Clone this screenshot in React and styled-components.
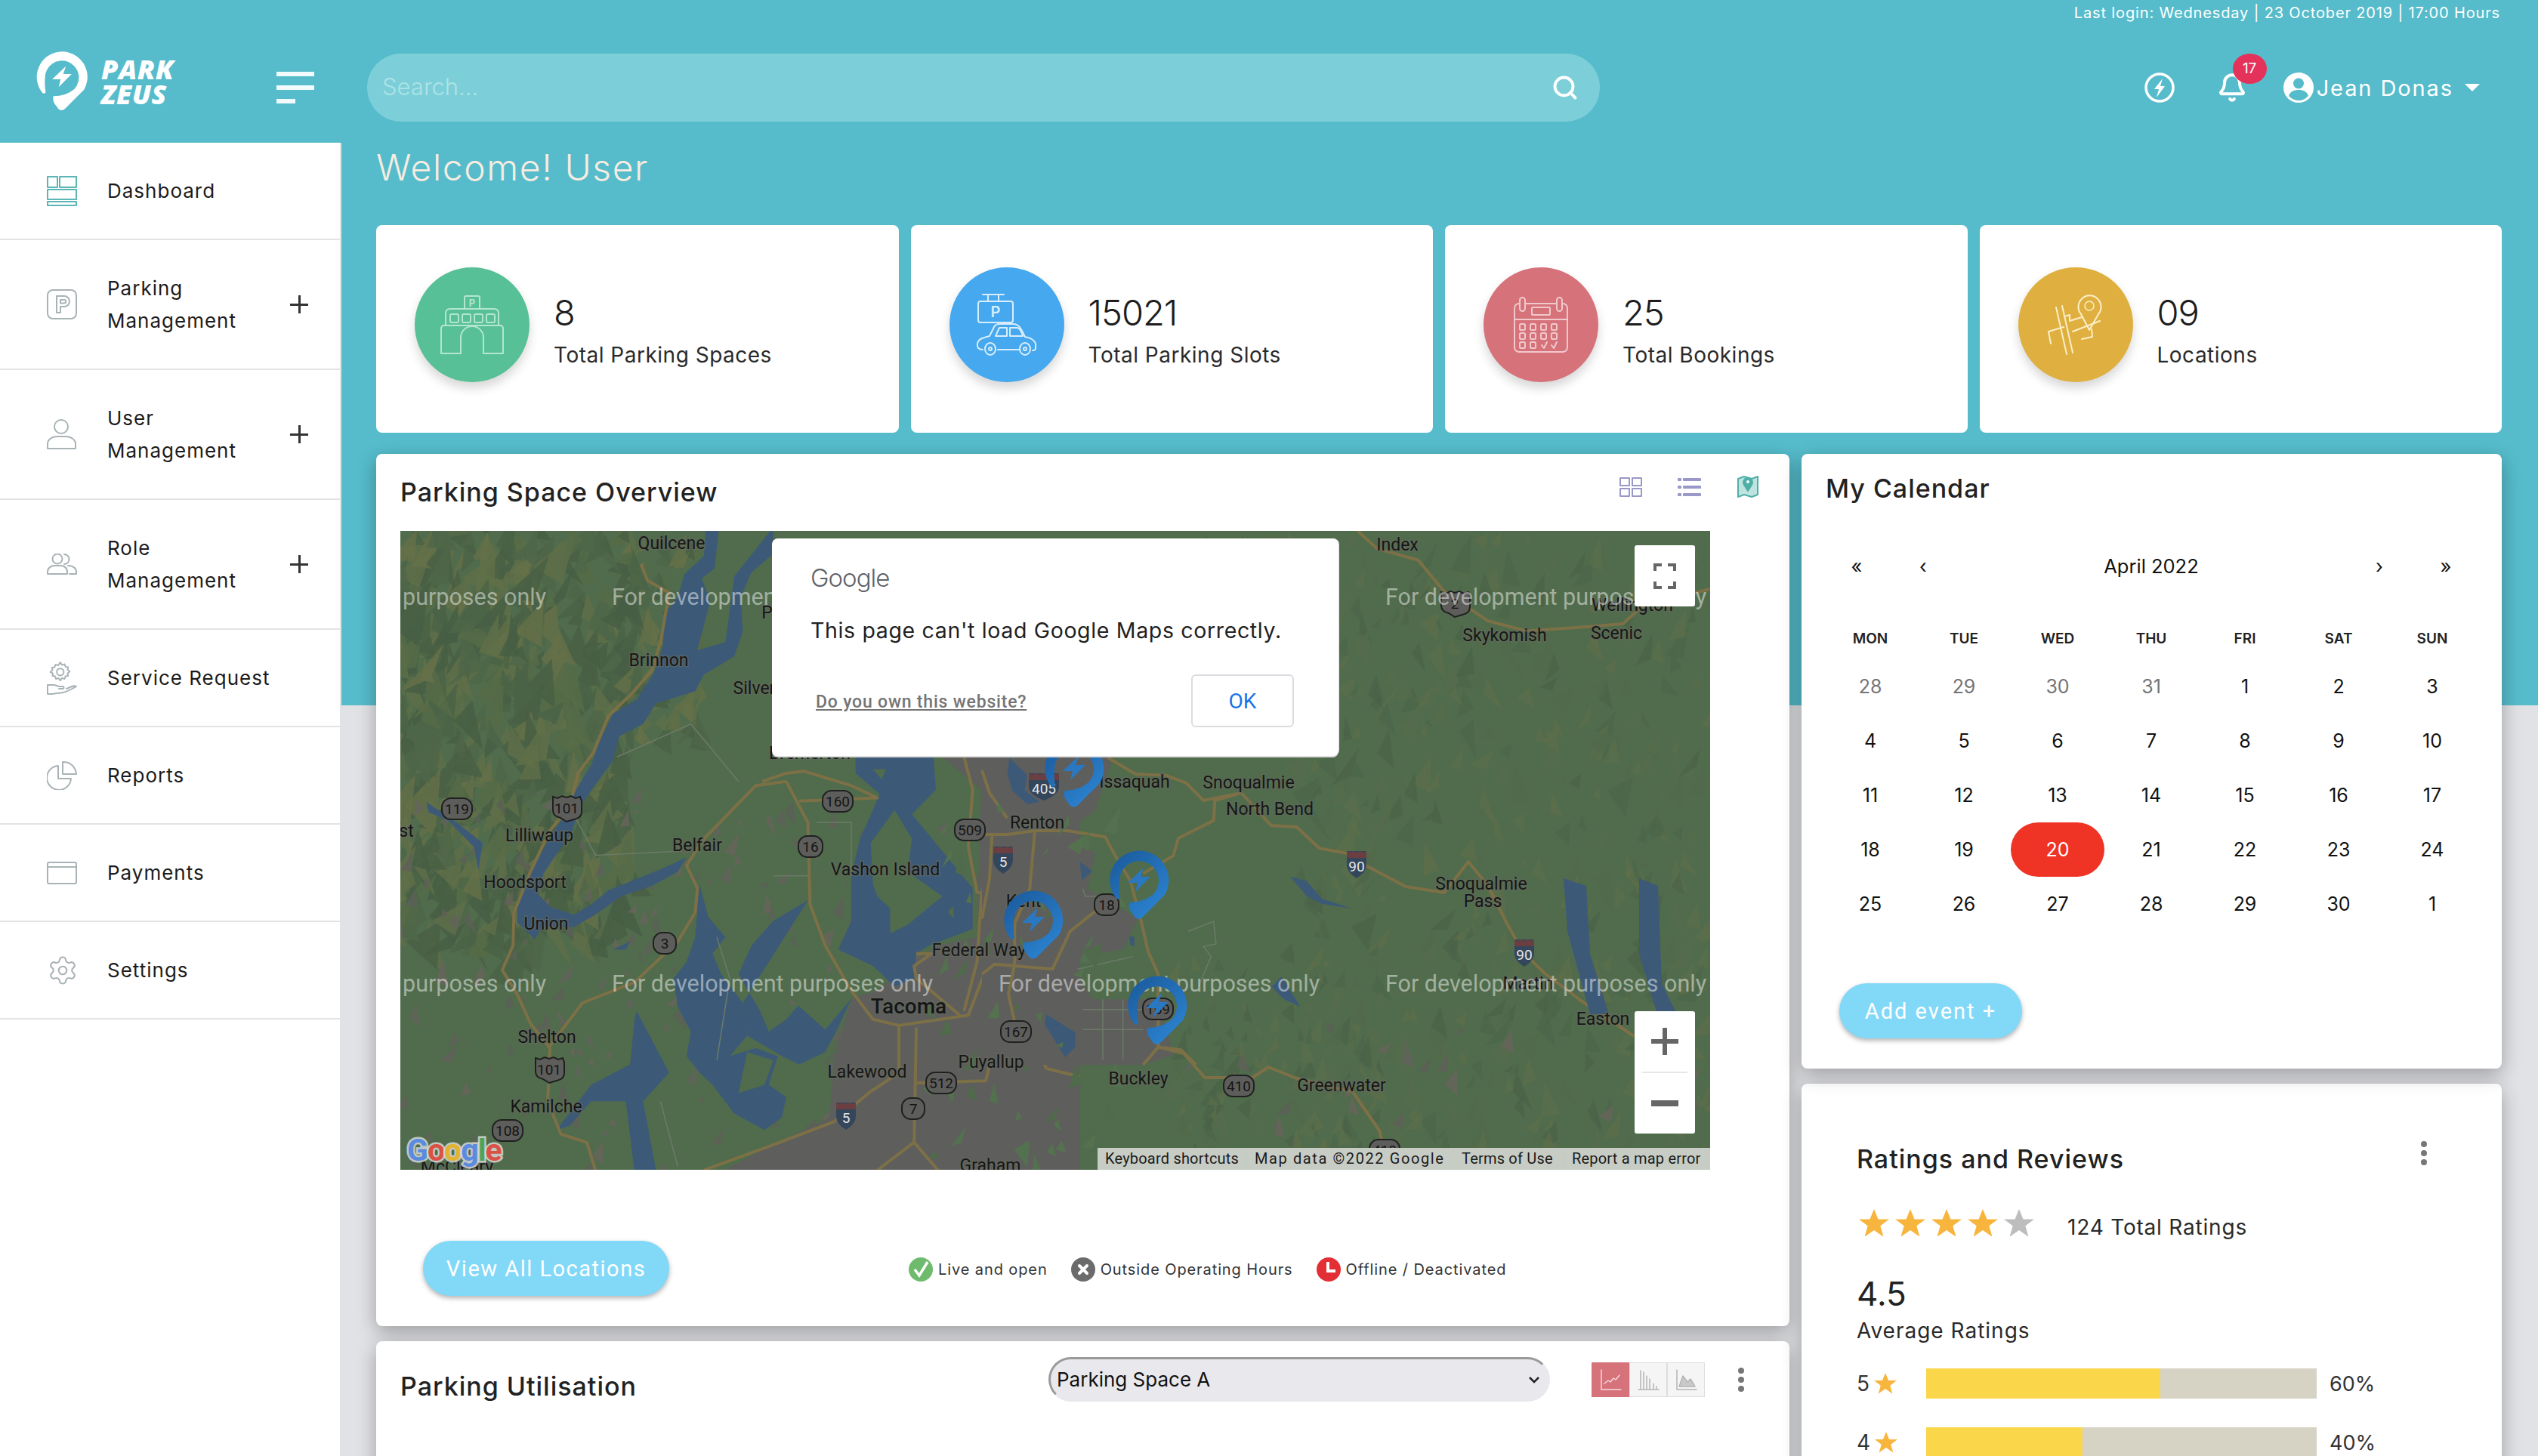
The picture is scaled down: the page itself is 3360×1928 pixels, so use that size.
import React from 'react';
import styled, { createGlobalStyle } from 'styled-components';
import { Search, Bell, Settings } from 'lucide-react';

const SANS = '"Inter", "Noto Sans", "Liberation Sans", sans-serif';
const ROBOTO = 'Roboto, "Liberation Sans", sans-serif';

const GlobalStyle = createGlobalStyle`
  html, body { margin: 0; padding: 0; height: 100%; }
  body { font-family: ${SANS}; color: #222; overflow: hidden; }
  * { box-sizing: border-box; }
`;

/* ---------- seeded scatter for the map terrain ---------- */
const makeRandom = (seed) => () => {
  seed = (seed * 16807) % 2147483647;
  return seed / 2147483647;
};

const scatter = (seed, count, x0, x1, y0, y1, size, colors) => {
  const rand = makeRandom(seed);
  const out = [];
  for (let i = 0; i < count; i++) {
    const x = x0 + rand() * (x1 - x0);
    const y = y0 + rand() * (y1 - y0);
    const s = size * (0.5 + rand());
    const lean = (rand() - 0.7) * s;
    const points = `${x},${y} ${x + s * 0.34 + lean},${y + s * (0.6 + rand())} ${x - s * 0.34 + lean},${y + s * (0.4 + rand())}`;
    out.push({ points, fill: colors[Math.floor(rand() * colors.length)] });
  }
  return out;
};

const RIDGE = ['#485f44', '#4a6346', '#566c47', '#5f6f49', '#657148', '#465e44', '#4f6648'];
const SOFT = ['#4a6548', '#586d4b', '#5e6f4b', '#486147', '#526a4a', '#63704b'];
const LOW = ['#5f6058', '#62635a', '#5b6057', '#66645c'];
const GREENS = ['#53704f', '#55724f', '#4f6b4b'];

const ridges = [
  ...scatter(11, 560, -20, 310, -20, 520, 42, RIDGE),
  ...scatter(23, 90, 300, 400, -10, 260, 28, RIDGE),
];
const softHills = [
  ...scatter(37, 500, 1180, 1750, -10, 860, 26, SOFT),
  ...scatter(41, 220, 1000, 1200, 0, 250, 24, SOFT),
  ...scatter(53, 110, 1000, 1300, 560, 860, 22, SOFT),
];
const lowland = [
  ...scatter(71, 230, 0, 880, 340, 850, 17, LOW),
  ...scatter(83, 30, 1000, 1734, 650, 850, 18, LOW),
];
const urbanGreen = scatter(97, 55, 700, 960, 350, 850, 18, GREENS);

/* ---------- icons ---------- */
const PIN_RING = 'M-30 25A39 39 0 1 1 34 20L5 49Q0 54-5 50L-11 42Q-15 36-13 30Q6 30 19 19A26 26 0 1 0-26 2Q-27 14-25 24Q-27 27-30 25Z';
const PIN_BOLT = 'M6-16L-15 4L-2 4L-5 16L15-4L2-4Z';

const Line = styled.svg`
  display: block;
  flex: none;
  fill: none;
  stroke: ${(p) => p.$color || '#a9b3b6'};
  stroke-width: ${(p) => p.$weight || 2};
  stroke-linejoin: round;
  stroke-linecap: round;
`;

const DashIcon = () => (
  <Line width="40" height="40" viewBox="0 0 40 40" $color="#5bb7b5">
    <rect x="1" y="1" width="13" height="14" />
    <rect x="17" y="1" width="22" height="14" />
    <rect x="1" y="18" width="38" height="13" />
    <rect x="1" y="34" width="38" height="5" />
  </Line>
);
const ParkIcon = () => (
  <Line width="40" height="40" viewBox="0 0 40 40">
    <rect x="1" y="1" width="38" height="38" rx="7" />
    <path d="M13 31V9h10a7 7 0 0 1 0 14h-5v8z M18 14h5a2.2 2.2 0 0 1 0 4.400h-5z" />
  </Line>
);
const UserIcon = () => (
  <Line width="40" height="40" viewBox="0 0 40 40">
    <ellipse cx="19" cy="10" rx="9" ry="9" />
    <path d="M1 39v-6c0-6 6-10 12-10h12c7 0 13 4 13 10v6z" />
  </Line>
);
const UsersIcon = () => (
  <Line width="40" height="28" viewBox="0 0 40 28">
    <circle cx="14" cy="7" r="6.500" />
    <path d="M1 27v-3c0-5 5-8 9-8h8c5 0 9 3 9 8v3z" />
    <path d="M23 1a6.500 6.500 0 0 1 0 13 M28 16c6 0 11 3 11 8v3H30" />
  </Line>
);
const ServiceIcon = () => (
  <Line width="40" height="44" viewBox="0 0 40 44">
    <g transform="translate(4,0) scale(1.150)" strokeWidth="1.700">
      <path d="M12 1l2 3 3-1 1 3 3 .5-.5 3 2.500 2-2.500 2 .5 3-3 .5-1 3-3-1-2 3-2-3-3 1-1-3-3-.5.5-3L.500 12 3 10l-.5-3 3-.5 1-3 3 1z" />
      <circle cx="12" cy="12" r="4" />
    </g>
    <path d="M1 31h8c3 0 5 2 8 2h4c2 0 2 3 0 3h-5M1 31v12h6l6-1c8 0 14-2 26-9-3-2-7 0-13 3" />
  </Line>
);
const PieIcon = () => (
  <Line width="40" height="38" viewBox="0 0 40 38">
    <path d="M15 6a16 16 0 1 0 17 17H15z" />
    <path d="M21 1v16h18A17 17 0 0 0 21 1z" />
  </Line>
);
const CardIcon = () => (
  <Line width="40" height="30" viewBox="0 0 40 30">
    <rect x="1" y="1" width="38" height="28" rx="2" />
    <path d="M1 7h38" />
  </Line>
);

const Building = () => (
  <Line width="84" height="78" viewBox="0 0 84 78" $color="#b2e6cf">
    <path d="M32 18V3q0-2 2-2h16q2 0 2 2v15" />
    <text x="42" y="15" textAnchor="middle" fontSize="13" fontWeight="700" fill="#b2e6cf" stroke="none">P</text>
    <path d="M7 40V24q0-6 6-6h58q6 0 6 6v16" />
    <rect x="13" y="25" width="11" height="11" rx="2" />
    <rect x="29" y="25" width="11" height="11" rx="2" />
    <rect x="45" y="25" width="11" height="11" rx="2" />
    <rect x="61" y="25" width="11" height="11" rx="2" />
    <path d="M3 40h78l2 3v34H57V56a15 15 0 0 0-30 0v21H1V43z" />
  </Line>
);
const CarSign = () => (
  <Line width="80" height="82" viewBox="0 0 80 82" $color="#d9eefc">
    <path d="M8 1h28M15 1v9M29 1v9" />
    <rect x="2" y="10" width="46" height="28" rx="3" />
    <text x="25" y="31" textAnchor="middle" fontSize="20" fontWeight="600" fill="#d9eefc" stroke="none">P</text>
    <path d="M8 74Q0 74 1 66q1-6 9-8l7-2 6-12q2-4 7-4h18q8 0 12 9l4 8q12 2 14 9v6q0 3-4 3" />
    <path d="M25 56l5-11h10v11zM44 45h10q5 2 7 11H44zM28 74h28" />
    <ellipse cx="18" cy="73" rx="7" ry="8" />
    <ellipse cx="64" cy="73" rx="7" ry="8" />
    <circle cx="18" cy="73" r="2" />
    <circle cx="64" cy="73" r="2" />
  </Line>
);
const CalendarArt = () => {
  const dots = [];
  for (let r = 0; r < 3; r++) {
    for (let c = 0; c < 4; c++) {
      if (r === 2 && c > 1) continue;
      dots.push(<rect key={`${r}-${c}`} x={8 + c * 14} y={36 + r * 12} width="7" height="8" rx="1.500" />);
    }
  }
  return (
    <Line width="72" height="74" viewBox="0 0 72 74" $color="#f1c9cc">
      <rect x="1" y="9" width="70" height="64" rx="6" />
      <path d="M1 30h70" />
      <rect x="8" y="1" width="7" height="18" rx="3.500" fill="#d6727a" />
      <rect x="57" y="1" width="7" height="18" rx="3.500" fill="#d6727a" />
      <rect x="24" y="14" width="24" height="10" rx="1" />
      {dots}
      <path d="M37 64l3 4 4-8M50 64l3 4 4-8" />
    </Line>
  );
};
const RoadPin = () => (
  <Line width="76" height="82" viewBox="0 0 76 82" $color="#fbeec7">
    <path d="M56 48L45 27a15 15 0 1 1 23 0z" />
    <circle cx="56" cy="16" r="6" strokeWidth="1.500" />
    <path d="M12 18l14 62M20 16l14 62M23 30l7-2v8l16-5M34 50l36-14M2 50l20-6M2 50l3 16M46 60l14-3-1-10" />
  </Line>
);

const GridView = () => (
  <Line width="30" height="26" viewBox="0 0 30 26" $color="#9a98c8">
    <rect x="1" y="1" width="12" height="10" />
    <rect x="17" y="1" width="12" height="10" />
    <rect x="1" y="15" width="12" height="10" />
    <rect x="17" y="15" width="12" height="10" />
  </Line>
);
const ListView = () => (
  <Line width="31" height="26" viewBox="0 0 31 26" $color="#9a98c8">
    <rect x="1" y="2" width="3" height="2" />
    <rect x="8" y="2" width="22" height="2" />
    <rect x="1" y="12" width="3" height="2" />
    <rect x="8" y="12" width="22" height="2" />
    <rect x="1" y="22" width="3" height="2" />
    <rect x="8" y="22" width="22" height="2" />
  </Line>
);
const MapView = () => (
  <Line width="30" height="31" viewBox="0 0 30 31" $color="#4fb0a8">
    <path d="M2 5l8-3 10 3 8-3v24l-8 3-10-3-8 3z" fill="#bfe4e0" />
    <path d="M15 21l-5-8a6 6 0 1 1 10 0z" fill="#4fb0a8" />
    <circle cx="15" cy="9" r="2" fill="#fff" stroke="none" />
  </Line>
);

const MiniLine = () => (
  <Line width="30" height="30" viewBox="0 0 30 30" $color="#f6d9db" $weight="1.500">
    <path d="M3 2v26h26M7 20l5-4 3 2 4-5 3 2 5-6" />
  </Line>
);
const MiniBars = () => (
  <Line width="30" height="30" viewBox="0 0 30 30" $color="#b4b4b4" $weight="1.500">
    <path d="M2 28h27M5 3v25M9 5v23M13 10v18M17 14v14M22 20v8M26 24v4" />
  </Line>
);
const MiniArea = () => (
  <Line width="30" height="30" viewBox="0 0 30 30" $color="#b4b4b4" $weight="1.500">
    <path d="M3 2v26h26" />
    <path d="M6 24l5-14 6 8 4-4 6 10z" fill="#c9c9c9" />
  </Line>
);

const StarSvg = styled.svg`
  display: block;
  flex: none;
  fill: ${(p) => p.$color};
`;

const Star = ({ size = 40, color = '#f7b53d' }) => (
  <StarSvg width={size} height={size * 0.92} viewBox="0 0 24 22" $color={color}>
    <path d="M12 0l3.300 8H24l-7 5.300L19.500 22 12 16.800 4.500 22 7 13.300 0 8h8.700z" />
  </StarSvg>
);

/* ---------- page frame ---------- */
const Page = styled.div`
  width: 3360px;
  height: 1928px;
  overflow: hidden;
  background: linear-gradient(#56bccb 934px, #e1e2e5 934px);
`;

const Header = styled.header`
  height: 189px;
  color: #fff;
`;

const LastLogin = styled.div`
  height: 34px;
  padding-right: 50px;
  font-size: 20px;
  line-height: 34px;
  text-align: right;
  letter-spacing: 0.85px;
`;

const TopRow = styled.div`
  display: flex;
  align-items: center;
  height: 90px;
  margin-top: 37px;
  padding: 0 77px 0 48px;
`;

const Logo = styled.div`
  display: flex;
  align-items: center;
  gap: 18px;
  width: 186px;
  margin-top: -16px;
`;

const LogoMark = styled.svg`
  display: block;
  flex: none;
  fill: #fff;
`;

const LogoWord = styled.div`
  font-family: "Open Sans", ${SANS};
  font-size: 36px;
  font-weight: 800;
  font-style: italic;
  line-height: 33px;
  letter-spacing: 0.5px;
`;

const Burger = styled.div`
  display: flex;
  flex-direction: column;
  gap: 12px;
  width: 50px;
  margin: 0 70px 0 132px;
`;

const BurgerBar = styled.span`
  display: block;
  width: ${(p) => (p.$short ? '25px' : '50px')};
  height: 6px;
  background: #f1fafc;
`;

const SearchBox = styled.div`
  display: flex;
  align-items: center;
  justify-content: space-between;
  width: 1632px;
  height: 90px;
  padding: 0 28px 0 20px;
  border-radius: 45px;
  background: #7ccfd8;
`;

const SearchText = styled.span`
  margin-top: -4px;
  font-size: 31px;
  font-weight: 300;
  color: #aee3e7;
`;

const UserArea = styled.div`
  display: flex;
  align-items: center;
  margin-left: auto;
`;

const HeadGlyph = styled.svg`
  display: block;
  flex: none;
`;

const BellWrap = styled.div`
  position: relative;
  width: 32px;
  height: 40px;
  margin: 0 52px 0 60px;
  svg { margin-left: -4px; }
`;

const Badge = styled.span`
  position: absolute;
  top: -25px;
  left: 17px;
  width: 45px;
  height: 40px;
  border-radius: 50%;
  background: #e5325a;
  font-size: 19px;
  line-height: 40px;
  text-align: center;
`;

const UserName = styled.span`
  margin: 0 15px 0 4px;
  font-size: 29px;
  letter-spacing: 1.9px;
`;

const Caret = styled.span`
  width: 0;
  height: 0;
  border-left: 10px solid transparent;
  border-right: 10px solid transparent;
  border-top: 10px solid #fff;
`;

const Body = styled.div`
  display: flex;
  height: 1739px;
`;

/* ---------- sidebar ---------- */
const Sidebar = styled.nav`
  flex: none;
  width: 452px;
  background: #fff;
  border-right: 2px solid #e1e2e5;
`;

const NavItem = styled.div`
  display: grid;
  grid-template-columns: 40px 1fr 24px;
  align-items: center;
  column-gap: 40px;
  height: ${(p) => (p.$tall ? '172px' : '129px')};
  padding: 0 42px 0 62px;
  border-bottom: 2px solid #e3e3e3;
  font-size: 26px;
  line-height: 43px;
  letter-spacing: 1px;
  color: #1c1c1c;
  white-space: nowrap;
`;

const Plus = styled.span`
  display: block;
  width: 24px;
  height: 24px;
  background:
    linear-gradient(#333, #333) center / 24px 3px no-repeat,
    linear-gradient(#333, #333) center / 3px 24px no-repeat;
`;

/* ---------- main ---------- */
const Main = styled.main`
  flex: 1;
  padding: 0 48px 0 46px;
`;

const Welcome = styled.h1`
  height: 109px;
  margin: 0;
  padding-top: 10px;
  font-size: 48px;
  font-weight: 300;
  line-height: 46px;
  letter-spacing: 1.6px;
  color: #f6ece0;
`;

const StatRow = styled.section`
  display: grid;
  grid-template-columns: repeat(4, 1fr);
  gap: 16px;
  margin-bottom: 28px;
`;

const StatCard = styled.div`
  display: flex;
  align-items: center;
  gap: 32px;
  height: 275px;
  padding: 0 51px;
  border-radius: 8px;
  background: #fff;
`;

const StatCircle = styled.div`
  display: flex;
  flex: none;
  align-items: center;
  justify-content: center;
  width: 152px;
  height: 152px;
  margin-bottom: 11px;
  border-radius: 50%;
  background: ${(p) => p.$color};
  box-shadow: 0 8px 14px rgba(0, 0, 0, 0.16);
`;

const StatNumber = styled.div`
  margin-top: 2px;
  font-size: 47px;
  font-weight: 300;
  line-height: 56px;
  letter-spacing: -1px;
  color: #1d1d1d;
`;

const StatLabel = styled.div`
  margin-top: 10px;
  font-size: 28px;
  line-height: 36px;
  letter-spacing: 0.5px;
  color: #2a2a2a;
`;

const Columns = styled.section`
  display: grid;
  grid-template-columns: 1871px 927px;
  gap: 16px;
  align-items: start;
`;

const Stack = styled.div`
  display: flex;
  flex-direction: column;
  gap: 20px;
`;

const Card = styled.div`
  position: relative;
  z-index: ${(p) => p.$layer || 1};
  border-radius: 8px;
  background: #fff;
  box-shadow: 0 8px 26px rgba(0, 0, 0, 0.3);
`;

const OverviewHead = styled.div`
  display: flex;
  align-items: flex-start;
  justify-content: space-between;
  height: 102px;
  padding: 28px 40px 0 32px;
`;

const CardTitle = styled.h2`
  margin: 0;
  font-size: 34px;
  font-weight: 500;
  line-height: 46px;
  letter-spacing: 1px;
  color: #222;
`;

const ViewIcons = styled.div`
  display: flex;
  align-items: center;
  gap: 47px;
`;

/* ---------- map ---------- */
const MapBox = styled.div`
  position: relative;
  width: 1734px;
  height: 846px;
  margin-left: 32px;
  overflow: hidden;
  background: #506c4c;
`;

const MapSvg = styled.svg`
  display: block;
  font-family: ${ROBOTO};
  font-size: 23px;
  path.water { fill: #3c5a78; }
  path.urban { fill: #5e5e5c; }
  path.land { fill: #506c4c; }
  path.road { fill: none; stroke: #7d7046; stroke-width: 4; stroke-linejoin: round; vector-effect: non-scaling-stroke; }
  path.minor { fill: none; stroke: #6c7a68; stroke-width: 1.500; vector-effect: non-scaling-stroke; }
`;

const PlaceLabel = styled.text`
  fill: #161616;
  font-size: ${(p) => p.$size || 23}px;
  font-weight: ${(p) => p.$weight || 400};
  stroke: rgba(100, 105, 95, 0.65);
  stroke-width: 3px;
  paint-order: stroke fill;
`;

const Watermark = styled.text`
  fill: rgba(255, 255, 255, 0.48);
  font-size: 30.500px;
`;

const ShieldText = styled.text`
  fill: #e5e5e5;
  font-size: 19px;
  text-anchor: middle;
  dominant-baseline: central;
`;

const StateShieldText = styled(ShieldText)`
  fill: #151515;
`;

const MapCtrl = styled.div`
  position: absolute;
  right: 20px;
  display: flex;
  flex-direction: column;
  align-items: center;
  justify-content: center;
  width: 80px;
  background: #fff;
  border-radius: 3px;
`;

const FullscreenCtrl = styled(MapCtrl)`
  top: 19px;
  height: 81px;
`;

const ZoomCtrl = styled(MapCtrl)`
  top: 636px;
  height: 162px;
  color: #666;
`;

const ZoomStep = styled.div`
  display: flex;
  flex: 1;
  align-items: center;
  justify-content: center;
  width: 60px;
  border-bottom: ${(p) => (p.$divide ? '2px solid #e6e6e6' : 'none')};
`;

const Attribution = styled.div`
  position: absolute;
  right: 0;
  bottom: 0;
  display: flex;
  gap: 2px;
  height: 29px;
  background: rgba(235, 238, 235, 0.75);
`;

const AttrItem = styled.span`
  width: ${(p) => p.$w}px;
  padding-left: 10px;
  background: #c7ccc5;
  font-family: ${ROBOTO};
  font-size: 20px;
  line-height: 29px;
  letter-spacing: ${(p) => p.$track || 0.2}px;
  color: #1c1c1c;
  white-space: nowrap;
`;

const GoogleMark = styled.div`
  position: absolute;
  left: 9px;
  bottom: 2px;
  font-family: ${ROBOTO};
  font-size: 41px;
  font-weight: 700;
  letter-spacing: -1px;
  -webkit-text-stroke: 5px rgba(215, 218, 215, 0.85);
  paint-order: stroke fill;
`;

const Letter = styled.span`
  color: ${(p) => p.$c};
`;

const Dialog = styled.div`
  position: absolute;
  top: 10px;
  left: 492px;
  width: 750px;
  height: 288px;
  padding: 30px 59px 0 51px;
  border-radius: 8px;
  background: #fff;
  box-shadow: 0 2px 0 #ddd, 1px 0 0 #ddd;
`;

const DialogLogo = styled.div`
  height: 44px;
  font-size: 33px;
  font-weight: 300;
  line-height: 44px;
  letter-spacing: -1px;
  color: #5f6368;
`;

const DialogMsg = styled.div`
  margin-top: 26px;
  font-size: 28.500px;
  line-height: 44px;
  letter-spacing: 0.65px;
  color: #222;
  white-space: nowrap;
`;

const DialogFoot = styled.div`
  display: flex;
  align-items: center;
  justify-content: space-between;
  height: 70px;
  margin-top: 36px;
`;

const OwnLink = styled.a`
  margin: 2px 0 0 7px;
  font-family: ${ROBOTO};
  font-size: 23px;
  font-weight: 500;
  letter-spacing: 0.8px;
  color: #757575;
  text-decoration: underline;
`;

const OkButton = styled.button`
  width: 136px;
  height: 70px;
  border: 2px solid #dadce0;
  border-radius: 6px;
  background: #fff;
  font-family: ${ROBOTO};
  font-size: 28px;
  color: #1a73e8;
`;

/* ---------- footer of the overview card ---------- */
const OverviewFoot = styled.div`
  display: flex;
  align-items: center;
  height: 207px;
  padding: 94px 0 40px 62px;
`;

const PillButton = styled.button`
  flex: none;
  width: ${(p) => p.$w}px;
  height: 73px;
  border: none;
  border-radius: 37px;
  background: #82d8f7;
  box-shadow: 0 3px 6px rgba(0, 0, 0, 0.3);
  font-family: ${ROBOTO};
  font-size: 29px;
  letter-spacing: 1.500px;
  color: #fff;
`;

const Legend = styled.div`
  display: flex;
  align-items: center;
  gap: 31px;
  margin: 3px 0 0 317px;
  font-size: 20px;
  letter-spacing: 0.9px;
  color: #333;
`;

const LegendItem = styled.div`
  display: flex;
  align-items: center;
  gap: 7px;
`;

const LegendDot = styled.svg`
  display: block;
  width: 32px;
  height: 32px;
`;

/* ---------- utilisation ---------- */
const UtilRow = styled.div`
  display: flex;
  align-items: center;
  height: 400px;
  padding: 21px 0 320px 32px;
`;

const UtilTitle = styled(CardTitle)`
  width: 858px;
  margin-top: 18px;
`;

const SpaceSelect = styled.select`
  appearance: none;
  width: 664px;
  height: 59px;
  padding: 0 8px;
  border: 3px solid;
  border-color: #9a9a9a #e9e9ed #e9e9ed #9a9a9a;
  border-radius: 30px;
  background: #e9e9ed url("data:image/svg+xml,%3Csvg xmlns='http://www.w3.org/2000/svg' width='16' height='10' viewBox='0 0 16 10'%3E%3Cpath d='M2 2l6 6 6-6' fill='none' stroke='%23222' stroke-width='2.500'/%3E%3C/svg%3E") no-repeat right 10px center;
  font-family: ${SANS};
  font-size: 26px;
  color: #111;
`;

const ChartToggle = styled.div`
  display: flex;
  margin-left: 55px;
`;

const ChartBtn = styled.div`
  display: flex;
  align-items: center;
  justify-content: center;
  width: 50px;
  height: 46px;
  background: ${(p) => (p.$on ? '#d6727a' : '#f5f5f5')};
  border: ${(p) => (p.$on ? 'none' : '1px solid #ddd')};
`;

const Dots = styled.div`
  display: flex;
  flex-direction: column;
  gap: 4px;
  margin: ${(p) => p.$margin || 0};
`;

const Dot = styled.span`
  width: 8px;
  height: 8px;
  border-radius: 50%;
  background: #777;
`;

/* ---------- calendar ---------- */
const CalendarCard = styled(Card)`
  height: 814px;
  padding: 24px 30px 0 29px;
`;

const CalTitle = styled(CardTitle)`
  margin-left: 3px;
  line-height: 44px;
`;

const CalNav = styled.div`
  display: grid;
  grid-template-columns: 88px 88px 1fr 88px 88px;
  align-items: center;
  height: 60px;
  margin-top: 50px;
  font-size: 25.500px;
  text-align: center;
  color: #111;
`;

const DayGrid = styled.div`
  display: grid;
  grid-template-columns: repeat(7, 1fr);
  text-align: center;
`;

const Weekdays = styled(DayGrid)`
  height: 40px;
  margin: 47px 0 7px;
  font-size: 19px;
  font-weight: 600;
  line-height: 40px;
  color: #222;
`;

const DayCell = styled.div`
  height: 72px;
  border-radius: 36px;
  background: ${(p) => (p.$today ? '#ef3324' : 'transparent')};
  font-size: 25px;
  line-height: 72px;
  color: ${(p) => (p.$today ? '#fff' : p.$muted ? '#757575' : '#111')};
`;

const AddEvent = styled(PillButton)`
  display: block;
  margin: 69px 0 0 21px;
  letter-spacing: 2px;
`;

/* ---------- ratings ---------- */
const RatingsCard = styled(Card)`
  height: 800px;
  padding: 80px 99px 0 73px;
`;

const RatingsHead = styled.div`
  display: flex;
  justify-content: space-between;
  height: 40px;
`;

const RatingsTitle = styled(CardTitle)`
  line-height: 40px;
`;

const StarRow = styled.div`
  display: flex;
  align-items: center;
  gap: 8px;
  margin: 41px 0 0 3px;
`;

const TotalText = styled.span`
  margin: 12px 0 0 36px;
  font-size: 28px;
  letter-spacing: 0.8px;
  color: #2a2a2a;
`;

const Average = styled.div`
  margin-top: 42px;
  font-size: 44px;
  line-height: 58px;
  color: #222;
`;

const AverageLabel = styled.div`
  margin: 0 0 30px;
  font-size: 28px;
  line-height: 40px;
  letter-spacing: 1px;
  color: #2a2a2a;
`;

const BarRow = styled.div`
  display: grid;
  grid-template-columns: 92px 517px auto;
  align-items: center;
  height: 78px;
  padding-bottom: 38px;
`;

const BarKey = styled.div`
  display: flex;
  align-items: center;
  gap: 6px;
  font-size: 28px;
  color: #333;
`;

const BarTrack = styled.div`
  height: 40px;
  background: #d6d3c5;
`;

const BarFill = styled.div`
  height: 100%;
  background: #fad64b;
`;

const BarPct = styled.span`
  margin-left: 17px;
  font-size: 27px;
  color: #333;
`;

/* ---------- data ---------- */
const navItems = [
  { label: 'Dashboard', icon: <DashIcon /> },
  { label: ['Parking', 'Management'], icon: <ParkIcon />, tall: true },
  { label: ['User', 'Management'], icon: <UserIcon />, tall: true },
  { label: ['Role', 'Management'], icon: <UsersIcon />, tall: true },
  { label: 'Service Request', icon: <ServiceIcon /> },
  { label: 'Reports', icon: <PieIcon /> },
  { label: 'Payments', icon: <CardIcon /> },
  { label: 'Settings', icon: <Settings size={42} color="#a9b3b6" strokeWidth={1.2} /> },
];

const stats = [
  { color: '#58c096', value: '8', label: 'Total Parking Spaces', icon: <Building /> },
  { color: '#46a8ee', value: '15021', label: 'Total Parking Slots', icon: <CarSign /> },
  { color: '#d6727a', value: '25', label: 'Total Bookings', icon: <CalendarArt /> },
  { color: '#dfb040', value: '09', label: 'Locations', icon: <RoadPin /> },
];

const weeks = [
  [28, 29, 30, 31, 1, 2, 3],
  [4, 5, 6, 7, 8, 9, 10],
  [11, 12, 13, 14, 15, 16, 17],
  [18, 19, 20, 21, 22, 23, 24],
  [25, 26, 27, 28, 29, 30, 1],
];

const labels = [
  ['Quilcene', 359, 16], ['Brinnon', 342, 171], ['Lilliwaup', 184, 403], ['Belfair', 393, 416],
  ['Hoodsport', 165, 465], ['Union', 193, 520], ['Vashon Island', 642, 448], ['Federal Way', 766, 555],
  ['Kent', 825, 490], ['Shelton', 194, 670], ['Lakewood', 618, 716], ['Puyallup', 782, 703],
  ['Kamilche', 193, 762], ['McCleary', 75, 842], ['Graham', 781, 840], ['Index', 1320, 18],
  ['Wellington', 1631, 98], ['Skykomish', 1462, 138], ['Scenic', 1610, 135], ['Issaquah', 972, 332],
  ['Snoqualmie', 1123, 333], ['North Bend', 1151, 368], ['Renton', 843, 386], ['Snoqualmie', 1431, 467],
  ['Pass', 1433, 490], ['Buckley', 977, 725], ['Greenwater', 1246, 734], ['Easton', 1592, 646],
  ['Martin', 1493, 599], ['st', 8, 397], ['Silverdale', 490, 208], ['Poulsbo', 520, 108], ['Bremerton', 542, 294],
];

const stateShields = [
  ['119', 75, 368], ['160', 579, 358], ['16', 543, 418], ['509', 754, 396], ['3', 350, 546], ['167', 815, 663],
  ['512', 716, 731], ['7', 679, 765], ['108', 142, 794], ['18', 935, 495], ['410', 1110, 735], ['169', 1003, 633],
  ['410', 1303, 820],
];
const usShields = [['101', 220, 367], ['101', 197, 713], ['2', 1396, 96]];
const interstates = [['405', 852, 337], ['5', 798, 434], ['5', 590, 773], ['90', 1266, 440], ['90', 1488, 557]];

const StateShield = ({ label, x, y }) => {
  const w = label.length > 2 ? 40 : label.length === 2 ? 32 : 30;
  return (
    <g>
      <rect x={x - w / 2} y={y - 14} width={w} height={28} rx="12" fill="#5d5d5b" stroke="#202020" strokeWidth="2" />
      <StateShieldText x={x} y={y}>{label}</StateShieldText>
    </g>
  );
};

const UsShield = ({ label, x, y }) => (
  <g transform={`translate(${x},${y})`}>
    <path d="M-18-15l6 2 6-3 6 2 6-2 6 3 6-2 2 6v14q0 8-10 10L0 18l-8-5q-10-2-10-10V-9z" fill="#5d5d5b" stroke="#202020" strokeWidth="2" />
    <StateShieldText x={0} y={0}>{label}</StateShieldText>
  </g>
);

const Interstate = ({ label, x, y }) => (
  <g transform={`translate(${x},${y})`}>
    <path d={label.length > 2 ? 'M-20-16h40v18q0 10-20 18q-20-8-20-18z' : 'M-13-16h26v18q0 10-13 18q-13-8-13-18z'} fill="#33465c" />
    <path d={label.length > 2 ? 'M-20-16l5 2 5-2 5 2 5-2 5 2 5-2 5 2 5-2v9h-40z' : 'M-13-16l4 2 5-2 4 2 5-2 4 2 4-2v9h-26z'} fill="#6b3f42" />
    <ShieldText x={0} y={4} fontSize="18">{label}</ShieldText>
  </g>
);

const MapPin = ({ x, y }) => (
  <g transform={`translate(${x},${y})`}>
    <path d={PIN_RING} fill="url(#pinFade)" />
    <path d={PIN_BOLT} fill="#2a78c2" />
  </g>
);

const Shards = ({ items, fade = 1 }) => (
  <g fillOpacity={fade}>
    {items.map((t, i) => <polygon key={i} points={t.points} fill={t.fill} />)}
  </g>
);

const MapDrawing = () => (
  <MapSvg width="1734" height="846" viewBox="0 0 1734 846">
    <defs>
      <linearGradient id="pinFade" x1="0.1" y1="0" x2="0.8" y2="0.9">
        <stop offset="0" stopColor="#1b5a9c" />
        <stop offset="1" stopColor="#2b82cf" />
      </linearGradient>
    </defs>
    <rect width="1734" height="846" fill="#506c4c" />
    <Shards items={ridges} fade={0.8} />
    <Shards items={softHills} fade={0.55} />
    <Shards items={lowland} fade={0.85} />

    <g transform="scale(0.574,0.543) translate(0,-9)">
      <path className="urban" d="M1040 1150L1100 1130L1180 1060L1240 1020L1330 1000L1340 640L1250 560L1568 560L1568 1600L690 1600L850 1510L990 1440L1000 1300Z" />
      <path className="water" d="M705 0L700 70L655 115L640 170L612 210L605 290L585 355L545 420L490 455L460 520L440 580L405 640L385 695L350 745L320 805L290 870L270 925L270 965L310 1005L328 975L400 975L450 945L510 900L580 875L640 840L660 805L610 830L540 860L480 885L440 920L400 945L345 925L318 895L330 845L365 790L395 745L415 680L445 635L490 570L505 510L560 480L590 430L680 400L700 360L770 315L790 255L785 170L810 110L860 65L860 0L800 80L770 120L750 280L685 300L715 180L695 125L725 100L735 0Z" />
      <path className="water" d="M60 670L130 720L190 770L180 835L170 780L110 715L65 695Z" />
      <path className="water" d="M690 870L710 950L750 1000L720 1040L740 1090L790 1160L800 1240L760 1290L820 1270L870 1290L850 1360L890 1390L880 1440L840 1470L770 1430L720 1360L690 1330L660 1290L670 1230L640 1170L630 1100L660 1060L680 1000Z" />
      <path className="water" d="M940 910L860 960L810 1020L780 1090L830 1180L850 1230L890 1200L940 1140L980 1120L1040 1150L1010 1220L980 1280L920 1310L880 1290L800 1240L790 1160Z" />
      <path className="water" d="M545 1180L620 1330L560 1400L590 1570L540 1570L520 1400L440 1400L390 1460L360 1470L440 1360L530 1310L540 1200Z" />
      <path className="water" d="M1050 560L1230 560L1235 640L1180 700L1250 790L1320 880L1320 980L1220 1020L1190 1040L1185 1100L1140 1120L1090 1070L1010 1030L1040 960L1040 850L1060 760L1090 690L1105 650L1050 600Z" />
      <path className="land" d="M1085 770L1140 690L1180 760L1170 840L1250 900L1170 970L1130 990L1130 930L1100 900L1090 870Z" />
      <path className="land" d="M1090 590L1120 590L1110 615Z" />
      <path className="land" d="M860 1090L940 1010L960 1060L1040 1150L980 1225L900 1150Z" />
      <path className="land" d="M800 1280L860 1300L840 1360L780 1380Z" />
      <path className="water" d="M1400 570L1430 640L1450 660L1490 690L1560 690L1500 600L1490 560L1400 560Z" />
      <path className="water" d="M520 1030L550 970L530 1010L490 1030Z" />

      <path className="road" d="M555 90L570 130L620 160L600 280L580 350L530 410L480 460L445 550L410 600L390 680L345 740L300 840L262 940L260 1020L235 1080L270 1140L300 1210L345 1270L340 1400L370 1480L430 1500L450 1568" />
      <path className="road" d="M890 620L820 630L700 760L660 825L685 880L680 940L640 1010L540 1110L420 1160L345 1265" />
      <path className="road" d="M890 620L940 720L945 920L980 1020L1040 1130L1090 1200L1150 1215L1310 1190L1350 1080L1390 1060L1520 1080L1568 1050" />
      <path className="road" d="M835 620L890 600L930 595L1040 630L1100 660L920 668" />
      <path className="road" d="M1370 760L1340 900L1330 1060L1300 1180M1150 1215L1150 1330L1080 1380L1000 1450L850 1510L700 1568" />
      <path className="road" d="M1190 1220L1185 1500L1100 1568M1185 1500L1240 1568" />
      <path className="road" d="M1190 1355L1350 1350L1370 1265L1470 1275L1490 1320L1568 1340" />
      <path className="road" d="M1190 1040L1225 1040L1185 1070L1190 1100L1290 1190" />
      <path className="road" d="M1420 1090L1420 1230L1430 1270" />
      <path className="road" d="M1300 560L1320 640L1310 780L1330 890L1370 900L1390 750L1468 720" />
      <path className="minor" d="M500 560L670 480L780 620M400 700L450 800L650 790M860 850L940 850M730 1000L760 1100L730 1300M600 1400L640 1560M960 720L1040 720L1040 850" />
    </g>

    <g transform="translate(770,287) scale(0.3333)">
      <path className="urban" d="M0 0L520 40L450 250L340 330L450 420L420 560L620 680L560 800L400 830L380 900L440 1000L700 1000L760 1220L640 1260L0 1260Z" />
      <path className="water" d="M110 40L180 110L170 170L230 215L180 225L120 170L100 100Z" />
      <path className="water" d="M388 452L438 490L398 528Z" />
      <path className="water" d="M255 1060L370 1130L370 1190L330 1230L250 1100Z" />
      <path className="water" d="M1225 512L1290 530L1350 600L1470 640L1350 620L1290 590Z" />
      <path className="water" d="M1150 950L1190 910L1265 1030L1200 1000Z" />
      <path className="water" d="M585 750L605 750L605 790L590 785Z" />
      <path className="road" d="M0 345L100 345L210 330L340 330L490 355L530 430L590 530L630 680L660 810L700 900L700 1190L640 1260" />
      <path className="road" d="M700 1190L790 1200L850 1260" />
      <path className="road" d="M640 500L760 430L780 360L920 290L925 210L1030 180L880 210L810 140L730 110L610 105L500 40" />
      <path className="road" d="M1030 180L1150 310L1250 315L1340 400L1450 420" />
      <path className="road" d="M450 650L350 730L280 880L50 860L0 900" />
      <path className="road" d="M100 280L30 180L0 90M210 330L190 560L130 700L130 860L105 980L130 1090" />
      <path className="road" d="M40 345L30 520L0 680" />
      <path className="minor" d="M400 560L410 590L500 590M820 730L920 690L930 780L880 790L910 830L860 950M380 880L600 830M400 1040L640 1040M400 1120L640 1120M480 1000L480 1240M560 1000L560 1240" />
    </g>

    <g transform="translate(770,-103) scale(0.638,0.383)">
      <path className="road" d="M780 270L820 330L905 370L960 480L1050 580L1130 615L1260 600L1330 590L1370 530L1510 470" />
    </g>
    <path className="road" d="M1253 427L1280 444L1331 471L1382 479L1414 438L1440 470L1465 520L1486 557L1514 585L1563 622L1633 669" />
    <path className="road" d="M1002 683L1037 692L1065 724L1128 724L1149 710L1184 724L1261 743L1296 794L1303 822" />
    <path className="water" d="M1540 460L1570 470L1575 560L1600 640L1575 640L1545 530Z" />
    <path className="water" d="M1640 460L1665 470L1670 600L1700 660L1670 660L1640 560Z" />
    <Shards items={urbanGreen} />

    {labels.map(([t, x, y], i) => (
      <PlaceLabel key={i} x={x} y={y} textAnchor="middle" dominantBaseline="central">{t}</PlaceLabel>
    ))}
    <PlaceLabel x={673} y={629} textAnchor="middle" dominantBaseline="central" $size={28} $weight={500}>Tacoma</PlaceLabel>

    {stateShields.map(([t, x, y], i) => <StateShield key={i} label={t} x={x} y={y} />)}
    {usShields.map(([t, x, y], i) => <UsShield key={i} label={t} x={x} y={y} />)}
    {interstates.map(([t, x, y], i) => <Interstate key={i} label={t} x={x} y={y} />)}

    {[-232, 280, 792, 1304].map((x) => (
      <React.Fragment key={x}>
        <Watermark x={x} y={98}>For development purposes only</Watermark>
        <Watermark x={x} y={610}>For development purposes only</Watermark>
      </React.Fragment>
    ))}

    <MapPin x={892} y={314} />
    <MapPin x={978} y={462} />
    <MapPin x={838} y={515} />
    <MapPin x={1002} y={628} />
  </MapSvg>
);

const FullscreenIcon = () => (
  <Line width="30" height="34" viewBox="0 0 30 34" $color="#666" $weight="4">
    <g strokeLinecap="butt" strokeLinejoin="miter">
      <path d="M2 10V2h9M28 10V2h-9M2 24v8h9M28 24v8h-9" />
    </g>
  </Line>
);

const App = () => (
  <Page>
    <GlobalStyle />
    <Header>
      <LastLogin>Last login: Wednesday | 23 October 2019 | 17:00 Hours</LastLogin>
      <TopRow>
        <Logo>
          <LogoMark width="68" height="80" viewBox="-39 -39 78 93">
            <path d={PIN_RING} />
            <path d={PIN_BOLT} />
          </LogoMark>
          <LogoWord>PARK<br />ZEUS</LogoWord>
        </Logo>
        <Burger>
          <BurgerBar />
          <BurgerBar />
          <BurgerBar $short />
        </Burger>
        <SearchBox>
          <SearchText>Search...</SearchText>
          <Search size={36} color="#fff" strokeWidth={2.6} />
        </SearchBox>
        <UserArea>
          <HeadGlyph width="40" height="40" viewBox="0 0 40 40">
            <circle cx="20" cy="20" r="18" fill="none" stroke="#fff" strokeWidth="3.500" />
            <path d="M24 8L13 22h6l-3 11 11-15h-6z" fill="#fff" />
          </HeadGlyph>
          <BellWrap>
            <Bell size={40} color="#fff" strokeWidth={2.4} />
            <Badge>17</Badge>
          </BellWrap>
          <HeadGlyph width="40" height="40" viewBox="0 0 40 40">
            <circle cx="20" cy="20" r="20" fill="#fff" />
            <circle cx="20" cy="14.500" r="7" fill="#56bccb" />
            <path d="M7 31c2-6 7-8 13-8s11 2 13 8c-4 4-8 6-13 6s-9-2-13-6z" fill="#56bccb" />
          </HeadGlyph>
          <UserName>Jean Donas</UserName>
          <Caret />
        </UserArea>
      </TopRow>
    </Header>

    <Body>
      <Sidebar>
        {navItems.map((item) => (
          <NavItem key={String(item.label)} $tall={item.tall}>
            {item.icon}
            <div>
              {Array.isArray(item.label) ? item.label.map((l) => <div key={l}>{l}</div>) : item.label}
            </div>
            {item.tall && <Plus />}
          </NavItem>
        ))}
      </Sidebar>

      <Main>
        <Welcome>Welcome! User</Welcome>
        <StatRow>
          {stats.map((s) => (
            <StatCard key={s.label}>
              <StatCircle $color={s.color}>{s.icon}</StatCircle>
              <div>
                <StatNumber>{s.value}</StatNumber>
                <StatLabel>{s.label}</StatLabel>
              </div>
            </StatCard>
          ))}
        </StatRow>

        <Columns>
          <Stack>
            <Card>
              <OverviewHead>
                <CardTitle>Parking Space Overview</CardTitle>
                <ViewIcons>
                  <GridView />
                  <ListView />
                  <MapView />
                </ViewIcons>
              </OverviewHead>
              <MapBox>
                <MapDrawing />
                <Dialog>
                  <DialogLogo>Google</DialogLogo>
                  <DialogMsg>This page can't load Google Maps correctly.</DialogMsg>
                  <DialogFoot>
                    <OwnLink>Do you own this website?</OwnLink>
                    <OkButton>OK</OkButton>
                  </DialogFoot>
                </Dialog>
                <FullscreenCtrl><FullscreenIcon /></FullscreenCtrl>
                <ZoomCtrl>
                  <ZoomStep $divide>
                    <Line width="36" height="36" viewBox="0 0 36 36" $color="#666" $weight="6"><path strokeLinecap="butt" d="M18 0v36M0 18h36" /></Line>
                  </ZoomStep>
                  <ZoomStep>
                    <Line width="36" height="8" viewBox="0 0 36 8" $color="#666" $weight="8"><path strokeLinecap="butt" d="M0 4h36" /></Line>
                  </ZoomStep>
                </ZoomCtrl>
                <GoogleMark>
                  <Letter $c="#5a8be0">G</Letter>
                  <Letter $c="#dc5145">o</Letter>
                  <Letter $c="#e3b32e">o</Letter>
                  <Letter $c="#5a8be0">g</Letter>
                  <Letter $c="#4da35a">l</Letter>
                  <Letter $c="#dc5145">e</Letter>
                </GoogleMark>
                <Attribution>
                  <AttrItem $w={196}>Keyboard shortcuts</AttrItem>
                  <AttrItem $w={272} $track={1.6}>Map data ©2022 Google</AttrItem>
                  <AttrItem $w={144}>Terms of Use</AttrItem>
                  <AttrItem $w={193}>Report a map error</AttrItem>
                </Attribution>
              </MapBox>
              <OverviewFoot>
                <PillButton $w={326}>View All Locations</PillButton>
                <Legend>
                  <LegendItem>
                    <LegendDot viewBox="0 0 32 32">
                      <circle cx="16" cy="16" r="16" fill="#6fbb6d" />
                      <path d="M8 16l6 8L25 6" fill="none" stroke="#fff" strokeWidth="3.500" />
                    </LegendDot>
                    Live and open
                  </LegendItem>
                  <LegendItem>
                    <LegendDot viewBox="0 0 32 32">
                      <circle cx="16" cy="16" r="16" fill="#6b6b6b" />
                      <path d="M11 11l10 10M21 11L11 21" stroke="#fff" strokeWidth="4" strokeLinecap="round" />
                    </LegendDot>
                    Outside Operating Hours
                  </LegendItem>
                  <LegendItem>
                    <LegendDot viewBox="0 0 32 32">
                      <circle cx="16" cy="16" r="16" fill="#e32e35" />
                      <path d="M15 6v12h10" fill="none" stroke="#fff" strokeWidth="4" />
                    </LegendDot>
                    Offline / Deactivated
                  </LegendItem>
                </Legend>
              </OverviewFoot>
            </Card>

            <Card>
              <UtilRow>
                <UtilTitle>Parking Utilisation</UtilTitle>
                <SpaceSelect defaultValue="a">
                  <option value="a">Parking Space A</option>
                  <option value="b">Parking Space B</option>
                </SpaceSelect>
                <ChartToggle>
                  <ChartBtn $on><MiniLine /></ChartBtn>
                  <ChartBtn><MiniBars /></ChartBtn>
                  <ChartBtn><MiniArea /></ChartBtn>
                </ChartToggle>
                <Dots $margin="0 0 0 44px"><Dot /><Dot /><Dot /></Dots>
              </UtilRow>
            </Card>
          </Stack>

          <Stack>
            <CalendarCard $layer={2}>
              <CalTitle>My Calendar</CalTitle>
              <CalNav>
                <span>«</span>
                <span>‹</span>
                <span>April 2022</span>
                <span>›</span>
                <span>»</span>
              </CalNav>
              <Weekdays>
                {['MON', 'TUE', 'WED', 'THU', 'FRI', 'SAT', 'SUN'].map((d) => <div key={d}>{d}</div>)}
              </Weekdays>
              <DayGrid>
                {weeks.map((week, w) =>
                  week.map((d, i) => (
                    <DayCell key={`${w}-${i}`} $muted={w === 0 && i < 4} $today={w === 3 && d === 20}>{d}</DayCell>
                  ))
                )}
              </DayGrid>
              <AddEvent $w={242}>Add event +</AddEvent>
            </CalendarCard>

            <RatingsCard>
              <RatingsHead>
                <RatingsTitle>Ratings and Reviews</RatingsTitle>
                <Dots $margin="-4px 0 0 0"><Dot /><Dot /><Dot /></Dots>
              </RatingsHead>
              <StarRow>
                <Star /><Star /><Star /><Star /><Star color="#bdbdbd" />
                <TotalText>124 Total Ratings</TotalText>
              </StarRow>
              <Average>4.5</Average>
              <AverageLabel>Average Ratings</AverageLabel>
              {[['5', 60], ['4', 40], ['3', 0]].map(([n, pct]) => (
                <BarRow key={n}>
                  <BarKey>{n}<Star size={30} /></BarKey>
                  <BarTrack><BarFill style={{ width: `${pct}%` }} /></BarTrack>
                  <BarPct>{pct}%</BarPct>
                </BarRow>
              ))}
            </RatingsCard>
          </Stack>
        </Columns>
      </Main>
    </Body>
  </Page>
);

export default App;
